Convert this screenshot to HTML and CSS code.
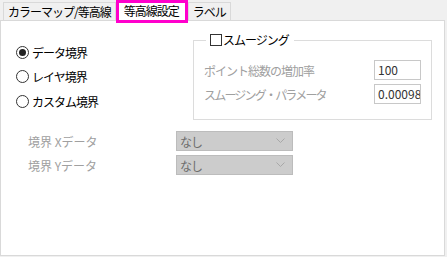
FILE: index.html
```html
<!DOCTYPE html>
<html lang="ja">
<head>
    <meta charset="UTF-8">
    <title>等高線設定</title>
    <link rel="stylesheet" href="styles.css">
</head>
<body>

    <div class="tabs">
        <div class="tab">カラーマップ/等高線</div>
        <div class="tab active">等高線設定</div>
        <div class="tab">ラベル</div>
    </div>

    <div class="panel">
        <div class="top">
            <div class="radios">
                <div class="radio-row"><span class="radio checked"></span>データ境界</div>
                <div class="radio-row"><span class="radio"></span>レイヤ境界</div>
                <div class="radio-row"><span class="radio"></span>カスタム境界</div>
            </div>

            <fieldset class="group">
                <legend><span class="check"></span>スムージング</legend>
                <div class="field-row">
                    <span class="muted">ポイント総数の増加率</span>
                    <span class="textbox">100</span>
                </div>
                <div class="field-row">
                    <span class="muted tight">スムージング・パラメータ</span>
                    <span class="textbox">0.000984</span>
                </div>
            </fieldset>
        </div>

        <div class="bounds">
            <div class="bound-row">
                <span class="muted bound-label">境界 Xデータ</span>
                <span class="select">なし
                    <svg width="9" height="6" viewBox="0 0 9 6"><polyline points="0.5,0.5 4.5,4.5 8.5,0.5" fill="none" stroke="#a8a8a8" stroke-width="1"/></svg>
                </span>
            </div>
            <div class="bound-row">
                <span class="muted bound-label">境界 Yデータ</span>
                <span class="select">なし
                    <svg width="9" height="6" viewBox="0 0 9 6"><polyline points="0.5,0.5 4.5,4.5 8.5,0.5" fill="none" stroke="#a8a8a8" stroke-width="1"/></svg>
                </span>
            </div>
        </div>
    </div>

</body>
</html>
```

FILE: styles.css
```css
body {
    margin: 0;
    background-color: #f0f0f0;
    font-family: "Noto Sans CJK JP", "Noto Sans", sans-serif;
    font-size: 12px;
    letter-spacing: -1px;
    color: #000;
}
.tabs {
    display: flex;
    align-items: flex-end;
    height: 20px;
    padding-left: 3px;
}
.tab {
    height: 18px;
    line-height: 17px;
    padding: 0 4px 0 4px;
    background-color: #f0f0f0;
    border: 1px solid #d9d9d9;
    border-bottom: none;
    box-sizing: border-box;
}
.tab.active {
    position: relative;
    z-index: 1;
    height: 23px;
    margin-bottom: -3px;
    line-height: 15px;
    padding: 0 6px 0 5px;
    background-color: #fff;
    border: 3px solid #ff00cc;
}
.panel {
    width: 445px;
    height: 236px;
    background-color: #fff;
    border: 1px solid #d9d9d9;
    box-sizing: border-box;
}
.top {
    display: flex;
    align-items: flex-start;
}
.radios {
    width: 177px;
    margin-top: 19px;
    padding-left: 15px;
}
.radio-row {
    display: flex;
    align-items: center;
    height: 24.5px;
}
.radio {
    width: 13px;
    height: 13px;
    margin-right: 3px;
    border: 1px solid #333;
    border-radius: 50%;
    box-sizing: border-box;
    display: flex;
    align-items: center;
    justify-content: center;
}
.radio.checked::after {
    content: "";
    width: 7px;
    height: 7px;
    border-radius: 50%;
    background-color: #222;
}
.group {
    width: 239px;
    margin: 12px 0 0 0;
    padding: 13px 10px 15px 10px;
    border: 1px solid #dcdcdc;
    box-sizing: border-box;
}
.group legend {
    display: flex;
    align-items: center;
    height: 14px;
    line-height: 14px;
    margin-left: 2px;
    padding: 0 5px 0 4px;
}
.check {
    width: 12px;
    height: 12px;
    margin-right: 1px;
    border: 1px solid #333;
    box-sizing: border-box;
}
.field-row {
    display: flex;
    align-items: center;
    justify-content: space-between;
    height: 20px;
}
.field-row + .field-row {
    margin-top: 4px;
}
.muted {
    color: #a0a0a0;
}
.tight {
    letter-spacing: -1.8px;
}
.textbox {
    width: 47px;
    height: 20px;
    line-height: 18px;
    padding-left: 3px;
    border: 1px solid #c8c8c8;
    box-sizing: border-box;
    color: #333;
    letter-spacing: 0;
    overflow: hidden;
    white-space: nowrap;
}
.bounds {
    margin-top: 11px;
    padding-left: 27px;
}
.bound-row {
    display: flex;
    align-items: center;
    height: 20px;
}
.bound-row + .bound-row {
    margin-top: 4px;
}
.bound-label {
    width: 148px;
    letter-spacing: 0;
}
.select {
    width: 117px;
    height: 20px;
    display: flex;
    align-items: center;
    justify-content: space-between;
    padding: 0 7px 0 3px;
    background-color: #cccccc;
    border: 1px solid #bcbcbc;
    box-sizing: border-box;
    color: #6d6d6d;
}
```
